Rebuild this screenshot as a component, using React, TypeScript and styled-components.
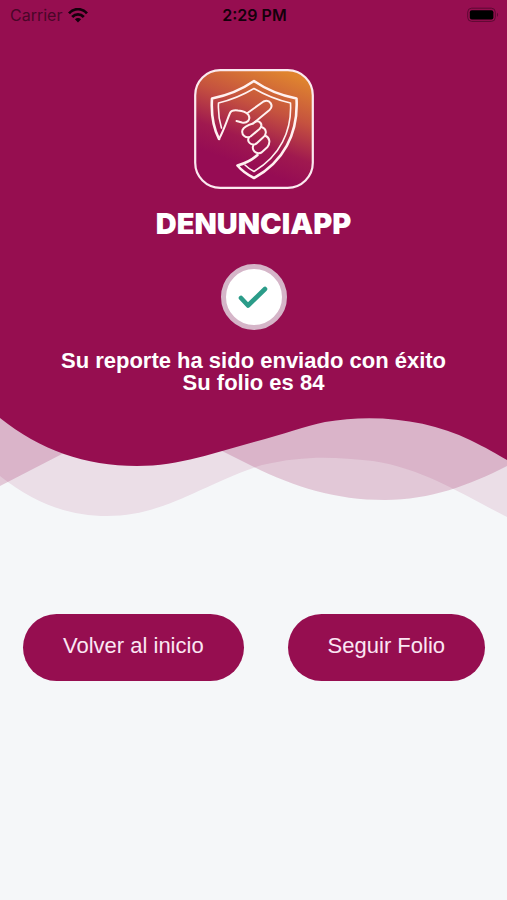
import React from "react";
import styled, { createGlobalStyle } from "styled-components";

const WINE = "#960e50";
const PAPER = "#f5f7f9";

const GlobalStyle = createGlobalStyle`
  *, *::before, *::after { box-sizing: border-box; }
  body {
    margin: 0;
    background: ${PAPER};
    font-family: "Liberation Sans", Arial, sans-serif;
  }
`;

const Screen = styled.div`
  min-height: 100vh;
  background: ${PAPER};
`;

const Hero = styled.header`
  display: flex;
  flex-direction: column;
  align-items: center;
  background: ${WINE};
  color: #fff;
`;

const StatusBar = styled.div`
  display: grid;
  grid-template-columns: 1fr auto 1fr;
  align-items: center;
  width: 100%;
  height: 30px;
  padding: 0 8px 0 10px;
  color: #14000b;
  font: 400 16px/20px Inter, sans-serif;
`;

const Carrier = styled.span`
  display: flex;
  align-items: center;
  gap: 6px;
  color: #4a0628;
`;

const Clock = styled.time`
  font-weight: 600;
`;

const Battery = styled.svg`
  justify-self: end;
`;

const Logo = styled.svg`
  display: block;
  margin-top: 39px;
`;

const Brand = styled.h1`
  margin: 17px 0 0;
  font: 900 29px/36px Inter, sans-serif;
`;

const Badge = styled.div`
  display: grid;
  place-items: center;
  width: 66px;
  height: 66px;
  margin-top: 22px;
  border: 5px solid #d5b5c8;
  border-radius: 50%;
  background: #fff;
`;

const Message = styled.p`
  margin: 20px 0 0;
  padding: 0 16px 22px;
  font-size: 22px;
  font-weight: 700;
  line-height: 22px;
  text-align: center;
`;

const Waves = styled.svg`
  display: block;
  width: 100%;
  height: 104px;
`;

const Actions = styled.nav`
  display: flex;
  flex-wrap: wrap;
  justify-content: space-between;
  gap: 20px;
  padding: 94px 22px 40px 23px;
`;

const PillButton = styled.button`
  height: 67px;
  padding: 0 40px 3px;
  border: 0;
  border-radius: 34px;
  background: ${WINE};
  color: #fbe6f3;
  font: 400 22px/26px "Liberation Sans", Arial, sans-serif;
  cursor: pointer;
`;

function WifiIcon() {
  return (
    <svg width="20" height="15" viewBox="0 0 20 15" fill="none" stroke="#14000b" strokeWidth="2.8" aria-hidden="true">
      <path d="M1 5.4C6-.2 14-.2 19 5.4" />
      <path d="M4.2 9C7.6 5.4 12.4 5.4 15.8 9" />
      <path d="M10 14.4L6.9 11.2C8.6 9.6 11.4 9.6 13.1 11.2Z" fill="#14000b" stroke="none" />
    </svg>
  );
}

function BatteryIcon() {
  return (
    <Battery width="32" height="16" viewBox="0 0 32 16" aria-hidden="true">
      <rect x=".7" y="1.2" width="27.6" height="13.2" rx="4" fill="none" stroke="#5c0932" />
      <rect x="2.8" y="3.3" width="23.6" height="9.2" rx="2" fill="#000" />
      <path d="M30 5.8C31.4 6.3 31.4 9.3 30 9.8Z" fill="#5c0932" />
    </Battery>
  );
}

function ShieldLogo() {
  return (
    <Logo width="120" height="120" viewBox="0 0 120 120" fill="none" role="img" aria-label="Denunciapp">
      <defs>
        <linearGradient id="sunset" x1="95" y1="5" x2="60" y2="100" gradientUnits="userSpaceOnUse">
          <stop offset="0" stopColor="#df842f" />
          <stop offset=".4" stopColor="#c5523f" />
          <stop offset=".75" stopColor="#a0194f" />
          <stop offset="1" stopColor="#960c54" />
        </linearGradient>
      </defs>
      <rect x="1.2" y="1.2" width="117.6" height="117.6" rx="25" fill="url(#sunset)" stroke="#fbe9ef" strokeWidth="2.2" />
      <g stroke="#fff1f0" strokeLinejoin="round" strokeLinecap="round">
        <path
          strokeWidth="2.6"
          d="M25 70C19 58 17 45 18 29.500C33 26.500 47 21 60 12C73 21 87 26.500 102.500 29.500C104.500 65 89 93 60 109C53 105.500 48 102 43.500 96.500C51 94.500 58 91 63.500 86"
        />
        <path
          strokeWidth="1.6"
          d="M27.500 59C25 51 24 43 24.500 34C37 31 49 26 60 19.500C71 26 83 31 96.500 34C98 62 86 87 60 102.500C56 100.500 53.500 98.500 51 96"
        />
        <g strokeWidth="2">
          <path d="M25 70C30 61 33 51 36 44C37.500 41 40 41 44 41.500C49 41.800 52 42.500 54.500 46C57 51 53 54.500 48 53.500L42.500 52" />
          <path d="M53.500 44L69.500 32.500C76 29.500 80 37 75.500 41L59 54.500" />
          <path d="M59 54.500C54 56 50 57.500 48.500 61C47 66 52 70 56.500 67.500L65.500 60C70 55.500 65 50 60.500 53.500" />
          <path d="M67.500 58C73 60 73 65.500 69 68.500L62.500 74.500C57 77.500 52.500 72.500 55 68.500" />
          <path d="M71 66.500C76 68.500 76.500 74 73.500 78L67.500 83.500C62 86 57 81 59.500 76" />
        </g>
      </g>
    </Logo>
  );
}

function CheckIcon() {
  return (
    <svg width="32" height="24" viewBox="0 0 32 24" fill="none" aria-hidden="true">
      <path d="M3 13L10 20.500L27 4" stroke="#2b9c89" strokeWidth="4.6" strokeLinecap="round" strokeLinejoin="round" />
    </svg>
  );
}

function WaveDivider() {
  return (
    <Waves viewBox="0 416 507 104" preserveAspectRatio="none" aria-hidden="true">
      <path
        fill={WINE}
        fillOpacity=".2"
        d="M0 416V486L62 454C110 424 180 430 222 451L254 467C295 487 335 500 385 500C430 500 470 485 507 466V416Z"
      />
      <path
        fill={WINE}
        fillOpacity=".1"
        d="M0 416V476C35 504 70 516 107 516C165 516 200 485 262 465C305 455 335 457 373 461C425 469 465 496 507 517V416Z"
      />
      <path
        fill={WINE}
        d="M0 416V418C40 450 85 466 137 466C180 466 216 452 254 442C285 434 305 426 325 422C375 413 430 420 470 440C485 447 498 455 507 460V416Z"
      />
    </Waves>
  );
}

export default function App() {
  return (
    <Screen>
      <GlobalStyle />
      <Hero>
        <StatusBar>
          <Carrier>
            Carrier <WifiIcon />
          </Carrier>
          <Clock>2:29 PM</Clock>
          <BatteryIcon />
        </StatusBar>
        <ShieldLogo />
        <Brand>DENUNCIAPP</Brand>
        <Badge>
          <CheckIcon />
        </Badge>
        <Message>
          Su reporte ha sido enviado con éxito
          <br />
          Su folio es 84
        </Message>
      </Hero>
      <WaveDivider />
      <Actions>
        <PillButton type="button">Volver al inicio</PillButton>
        <PillButton type="button">Seguir Folio</PillButton>
      </Actions>
    </Screen>
  );
}
